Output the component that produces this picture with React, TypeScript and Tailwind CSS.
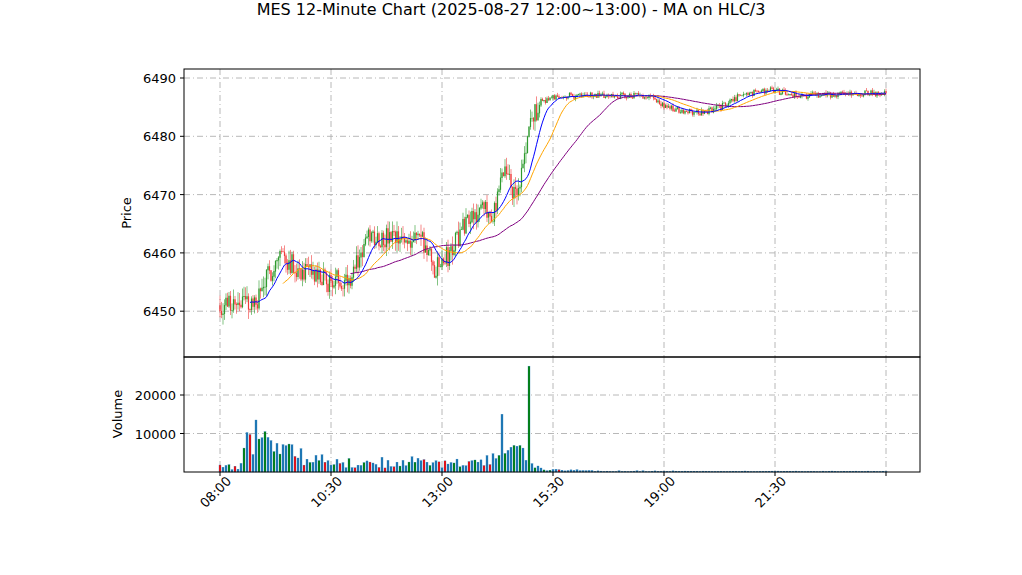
import React from "react";

function rng(seed: number) {
  let s = seed;
  return () => {
    s = (s * 1664525 + 1013904223) % 4294967296;
    return s / 4294967296;
  };
}
const kp: [number, number][] = [
  [220, 6451], [240, 6452], [255, 6451], [265, 6455], [280, 6460], [300, 6457], [330, 6455], [350, 6456],
  [370, 6463], [400, 6462], [420, 6463], [435, 6457], [450, 6460], [470, 6467], [495, 6467], [505, 6475],
  [517, 6469], [530, 6482], [540, 6486], [560, 6487], [600, 6487], [650, 6487], [665, 6485], [700, 6484],
  [720, 6485], [740, 6487], [770, 6488], [800, 6487], [886, 6487.5],
];
function base(x: number) {
  for (let i = 0; i < kp.length - 1; i++) {
    const [x0, p0] = kp[i], [x1, p1] = kp[i + 1];
    if (x >= x0 && x <= x1) return p0 + ((p1 - p0) * (x - x0)) / (x1 - x0);
  }
  return kp[kp.length - 1][1];
}
const volKp: [number, number][] = [
  [220, 1200], [238, 1200], [242, 7000], [260, 7000], [300, 4000], [340, 2500], [440, 2500], [480, 2500],
  [500, 4000], [530, 5000], [536, 1200], [545, 600], [600, 200], [886, 150],
];
function vbase(x: number) {
  for (let i = 0; i < volKp.length - 1; i++) {
    const [x0, p0] = volKp[i], [x1, p1] = volKp[i + 1];
    if (x >= x0 && x <= x1) return p0 + ((p1 - p0) * (x - x0)) / (x1 - x0);
  }
  return 150;
}
const r = rng(7);
type C = { x: number; o: number; c: number; h: number; l: number; v: number };
const bars: C[] = [];
let prev = 6451;
for (let x = 220; x <= 886; x += 1.5) {
  const b = base(x);
  const vol = x < 540 ? 1.8 : 0.5;
  const o = prev;
  const c = b + (r() - 0.5) * vol * 2;
  const h = Math.max(o, c) + r() * vol;
  const l = Math.min(o, c) - r() * vol;
  let v = vbase(x) * (0.4 + r() * 1.2);
  if (Math.abs(x - 242) < 1) v = 15000;
  if (Math.abs(x - 256) < 1.5) v = 13500;
  if (Math.abs(x - 437) < 1) v = 10000;
  if (Math.abs(x - 502) < 1) v = 15000;
  if (Math.abs(x - 522) < 1) v = 12000;
  if (Math.abs(x - 527) < 1) v = 14000;
  if (Math.abs(x - 529) < 1) v = 27500;
  bars.push({ x, o, c, h, l, v });
  prev = c;
}
const py = (p: number) => 78 + (6490 - p) * 5.83;
const vy = (v: number) => 472 - v * 0.00385;
function ma(n: number, start: number) {
  const pts: string[] = [];
  for (let i = 0; i < bars.length; i++) {
    if (i < n) continue;
    let s = 0;
    for (let j = i - n + 1; j <= i; j++) s += (bars[j].h + bars[j].l + bars[j].c) / 3;
    if (bars[i].x < start) continue;
    pts.push(`${bars[i].x.toFixed(1)},${py(s / n).toFixed(1)}`);
  }
  return pts.join(" ");
}
const xt = [[220, "08:00"], [331, "10:30"], [442, "13:00"], [553, "15:30"], [664, "19:00"], [775, "21:30"], [886, ""]] as const;
const grid = "#b0b0b0";

export default function App() {
  return (
    <div className="w-[1022px] h-[575px] bg-white flex flex-col" style={{ fontFamily: "'DejaVu Sans', sans-serif" }}>
      <div className="h-[20px] text-center text-[16px] leading-[20px] text-black">
        MES 12-Minute Chart (2025-08-27 12:00~13:00) - MA on HLC/3
      </div>
      <svg width="1022" height="555" viewBox="0 20 1022 555" className="block">
        <g stroke={grid} strokeDasharray="6 3 1 3" strokeWidth="0.9">
          {xt.map(([x]) => (
            <g key={x}>
              <line x1={x} y1={69} x2={x} y2={357} />
              <line x1={x} y1={357} x2={x} y2={472} />
            </g>
          ))}
          {[6490, 6480, 6470, 6460, 6450].map((p) => <line key={p} x1={184} x2={920} y1={py(p)} y2={py(p)} />)}
          {[10000, 20000].map((v) => <line key={v} x1={184} x2={920} y1={vy(v)} y2={vy(v)} />)}
        </g>
        {bars.map((b, i) => {
          const col = b.c >= b.o ? "#2e9a2e" : "#f03a3a";
          return (
            <g key={i}>
              <line x1={b.x} x2={b.x} y1={py(b.h)} y2={py(b.l)} stroke={col} strokeWidth="0.6" />
              <line x1={b.x} x2={b.x} y1={py(Math.max(b.o, b.c))} y2={py(Math.min(b.o, b.c)) + 0.5} stroke={col} strokeWidth="1.2" />
            </g>
          );
        })}
        <polyline points={ma(60, 350)} fill="none" stroke="purple" strokeWidth="1" />
        <polyline points={ma(27, 283)} fill="none" stroke="orange" strokeWidth="1" />
        <polyline points={ma(13, 250)} fill="none" stroke="blue" strokeWidth="1" />
        {bars.filter((_, i) => i % 2 === 0).map((b, i) => {
          const k = i % 5;
          const fill = b.x > 560 ? "#1f77b4" : k === 0 || k === 3 ? (b.c >= b.o ? "green" : "red") : "#1f77b4";
          return <rect key={i} x={b.x - 1} y={vy(b.v)} width={2} height={472 - vy(b.v)} fill={fill} stroke="#1f77b4" strokeWidth="0.3" />;
        })}
        <rect x={184} y={69} width={736} height={288} fill="none" stroke="black" strokeWidth="1" />
        <rect x={184} y={357} width={736} height={115} fill="none" stroke="black" strokeWidth="1" />
        <g fontSize="13" fill="black">
          {[6490, 6480, 6470, 6460, 6450].map((p) => (
            <g key={p}>
              <line x1={180} x2={184} y1={py(p)} y2={py(p)} stroke="black" />
              <text x={176} y={py(p) + 5} textAnchor="end">{p}</text>
            </g>
          ))}
          {[10000, 20000].map((v) => (
            <g key={v}>
              <line x1={180} x2={184} y1={vy(v)} y2={vy(v)} stroke="black" />
              <text x={176} y={vy(v) + 5} textAnchor="end">{v}</text>
            </g>
          ))}
          <text transform="translate(131 213) rotate(-90)" textAnchor="middle">Price</text>
          <text transform="translate(122 414) rotate(-90)" textAnchor="middle">Volume</text>
          {xt.map(([x, l]) => (
            <g key={x}>
              <line x1={x} x2={x} y1={472} y2={476} stroke="black" />
              <text transform={`translate(${x + 12} ${482}) rotate(-45)`} textAnchor="end">{l}</text>
            </g>
          ))}
        </g>
      </svg>
    </div>
  );
}
